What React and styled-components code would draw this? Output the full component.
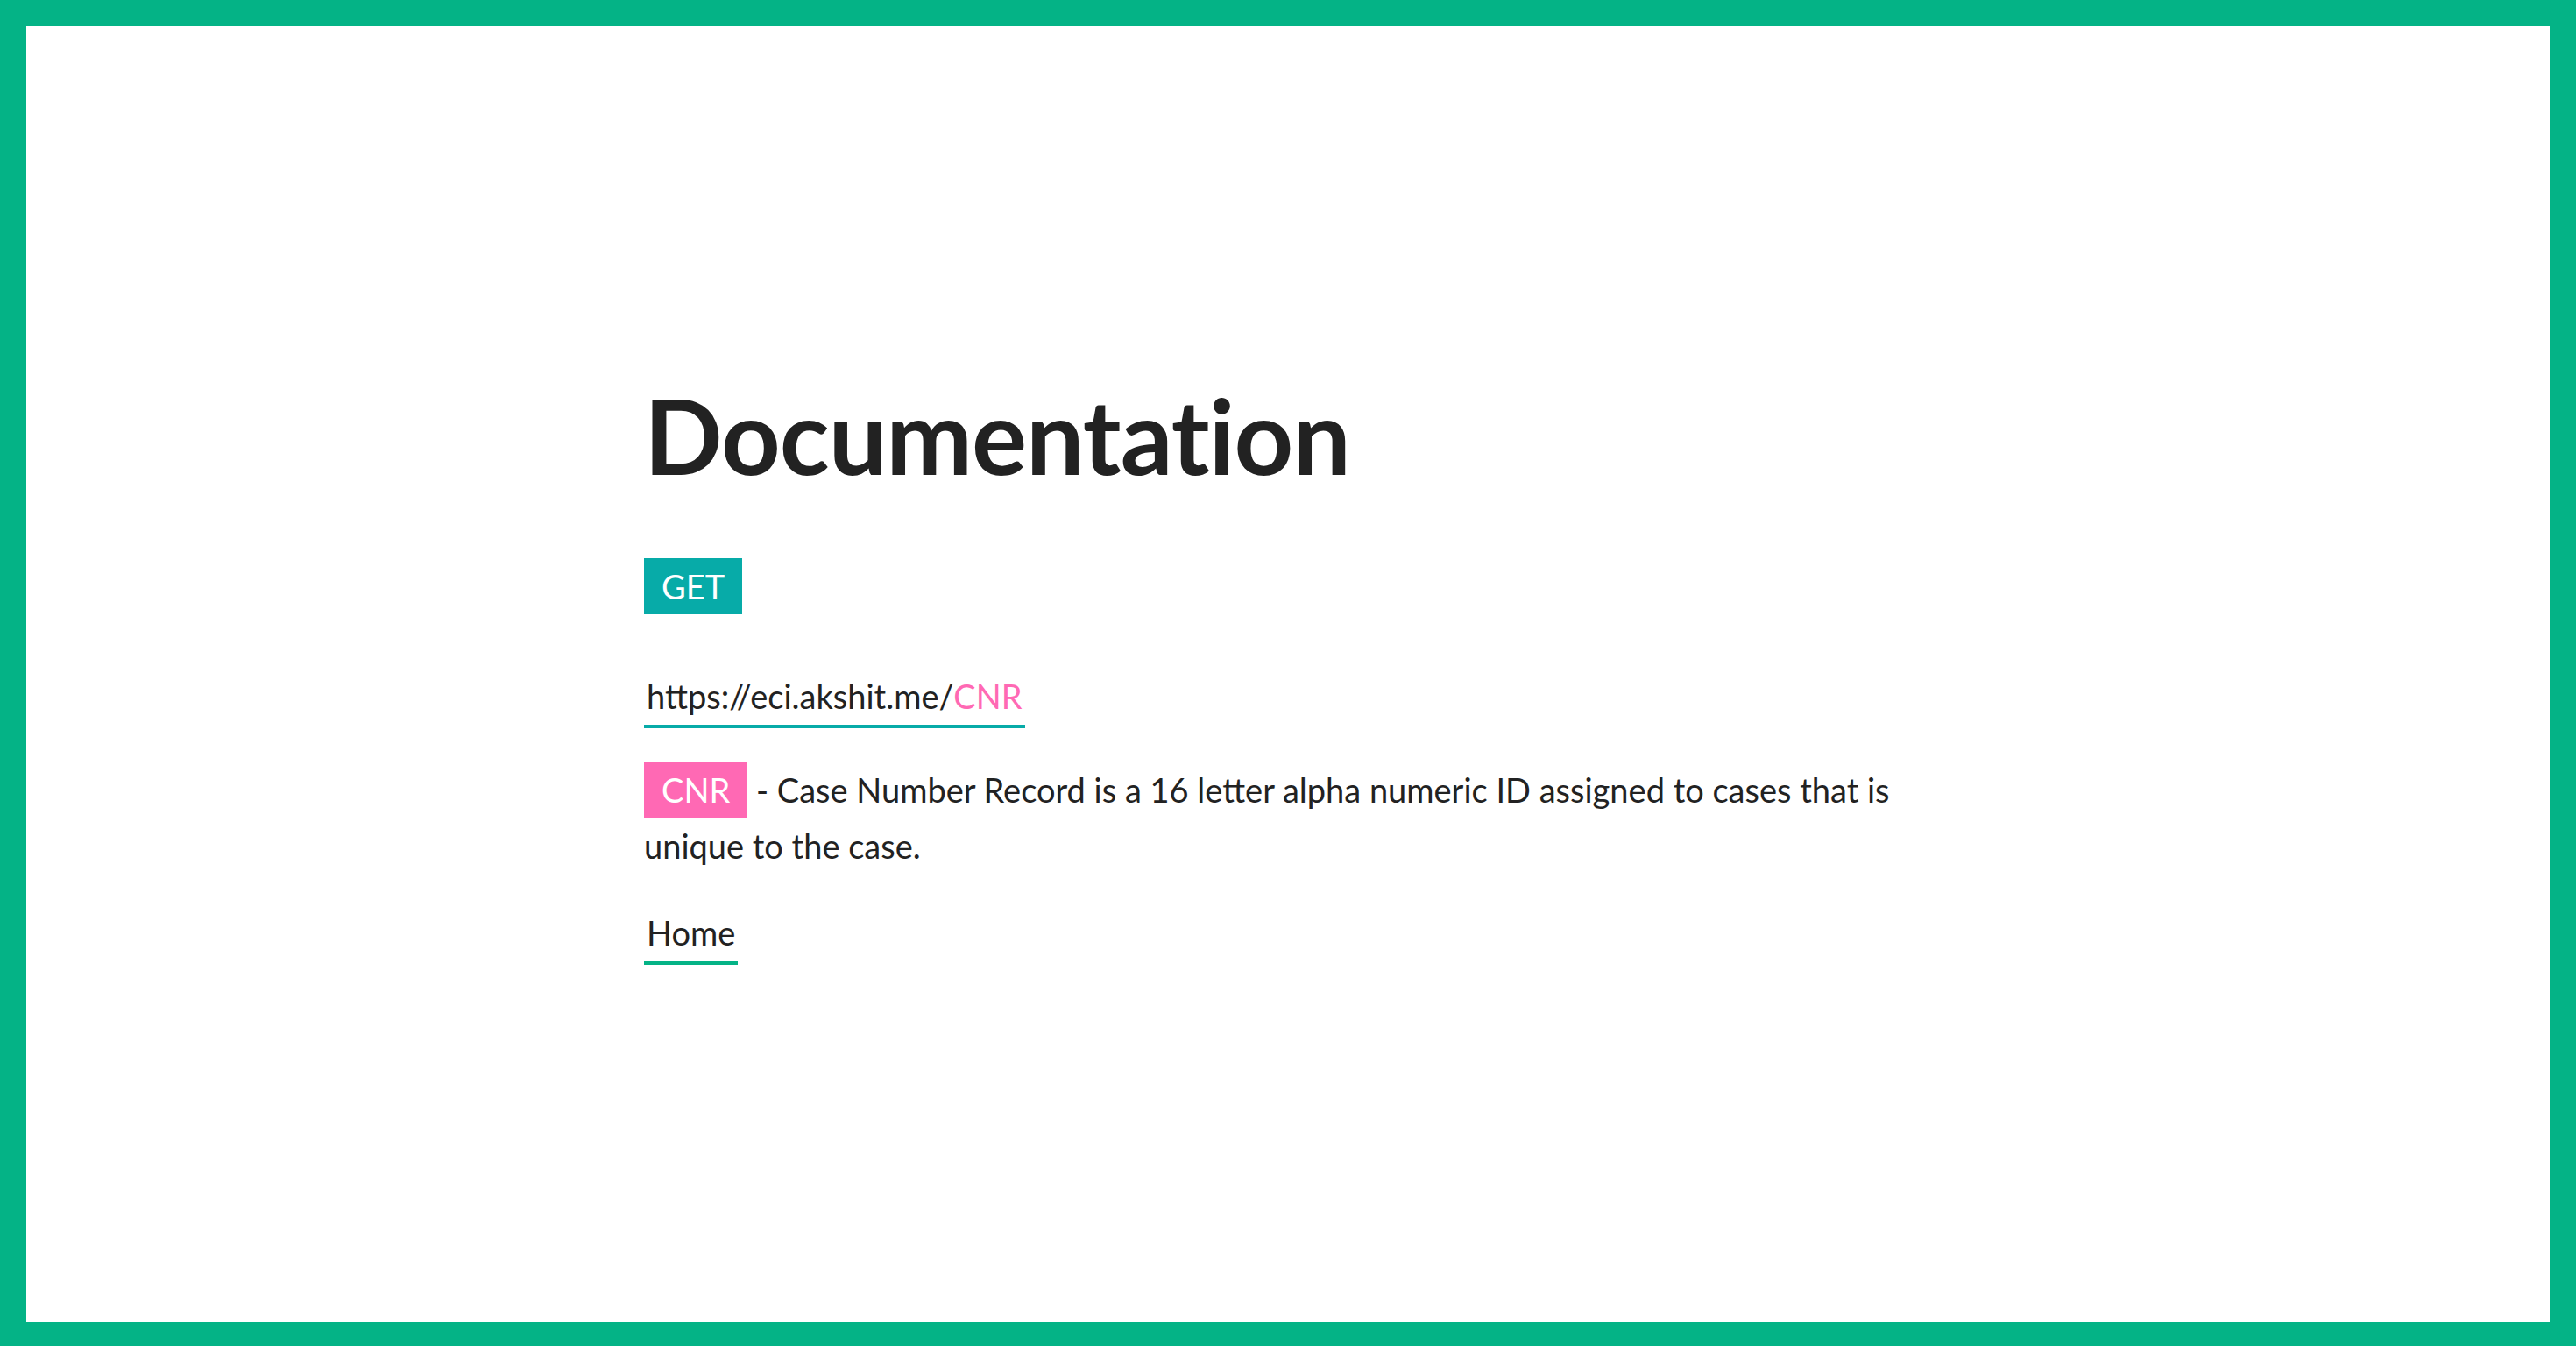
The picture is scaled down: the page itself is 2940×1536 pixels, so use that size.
import React from "react";
import styled, { createGlobalStyle } from "styled-components";

const GlobalStyle = createGlobalStyle`
  html, body {
    margin: 0;
    padding: 0;
    background: #ffffff;
  }
  * {
    box-sizing: border-box;
  }
  body {
    font-family: Lato, "Noto Sans", sans-serif;
    color: #222222;
  }
`;

const Frame = styled.main`
  min-height: 100vh;
  border: 30px solid #04b386;
  border-bottom-width: 27px;
  display: flex;
  align-items: center;
  justify-content: center;
`;

const Content = styled.section`
  width: 1470px;
  display: flex;
  flex-direction: column;
  align-items: flex-start;
`;

const Title = styled.h1`
  margin: 0 0 81px;
  font-size: 118px;
  line-height: 1;
  font-weight: 700;
  letter-spacing: -1px;
  color: #222222;
`;

const Tag = styled.span`
  display: inline-block;
  padding: 0 20px;
  height: 64px;
  line-height: 64px;
  font-size: 38px;
  color: #ffffff;
  background: ${(p) => p.$color};
`;

const Link = styled.a`
  display: inline-block;
  margin-top: ${(p) => p.$gap}px;
  padding: 0 3px 9px;
  font-size: 38px;
  line-height: 48px;
  color: #222222;
  text-decoration: none;
  border-bottom: 4px solid ${(p) => p.$line};
`;

const Accent = styled.span`
  color: #ff69b4;
`;

const Text = styled.p`
  margin: 38px 0 0;
  font-size: 38px;
  line-height: 64px;
`;

export default function App() {
  return (
    <>
      <GlobalStyle />
      <Frame>
        <Content>
          <Title>Documentation</Title>
          <Tag $color="#07aba8">GET</Tag>
          <Link href="#" $gap={69} $line="#07aba8">
            https://eci.akshit.me/<Accent>CNR</Accent>
          </Link>
          <Text>
            <Tag $color="#ff69b4">CNR</Tag> - Case Number Record is a 16 letter
            alpha numeric ID assigned to cases that is unique to the case.
          </Text>
          <Link href="#" $gap={43} $line="#04b386">
            Home
          </Link>
        </Content>
      </Frame>
    </>
  );
}
